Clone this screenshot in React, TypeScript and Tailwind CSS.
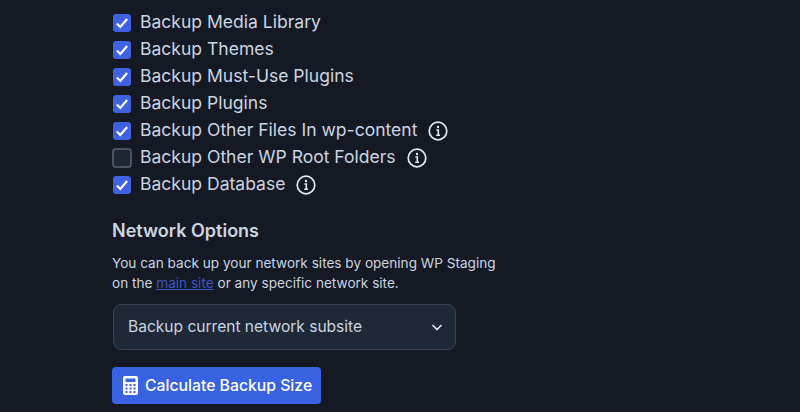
import React from "react";

const interFont = "font-['Inter',sans-serif]";

const InfoIcon = () => (
  <svg width="20" height="20" viewBox="0 0 20 20" fill="none" className="shrink-0">
    <circle cx="10" cy="10" r="8.8" stroke="#e2e8f0" strokeWidth="1.7" />
    <circle cx="10" cy="6" r="1.2" fill="#e2e8f0" />
    <path d="M8.400 9h1.900v5.200M8.200 14.300h3.800" stroke="#e2e8f0" strokeWidth="1.6" />
  </svg>
);

const Checkbox = ({ checked }: { checked: boolean }) =>
  checked ? (
    <span className="w-[18px] h-[18px] rounded-[3px] bg-[#3f62e0] flex items-center justify-center shrink-0">
      <svg width="16" height="16" viewBox="0 0 14 14" fill="none">
        <path d="M2.500 7.500l3 3 6-7" stroke="#fff" strokeWidth="1.9" />
      </svg>
    </span>
  ) : (
    <span className="w-[20px] h-[20px] -mx-px rounded-[4px] bg-[#1f2633] border-2 border-[#4b5261] shrink-0" />
  );

const options = [
  { label: "Backup Media Library", checked: true },
  { label: "Backup Themes", checked: true },
  { label: "Backup Must-Use Plugins", checked: true },
  { label: "Backup Plugins", checked: true },
  { label: "Backup Other Files In wp-content", checked: true, info: true },
  { label: "Backup Other WP Root Folders", checked: false, info: true },
  { label: "Backup Database", checked: true, info: true },
];

export default function App() {
  return (
    <div className={`w-[800px] h-[412px] overflow-hidden bg-[#151924] pl-[113px] pt-[9px] ${interFont}`}>
      <div className="flex flex-col">
        {options.map((o) => (
          <div key={o.label} className="h-[27px] flex items-center">
            <Checkbox checked={o.checked} />
            <span className="ml-[9px] text-[17.55px] text-[#cbd5e1]">{o.label}</span>
            {o.info && (
              <span className="ml-[11px]">
                <InfoIcon />
              </span>
            )}
          </div>
        ))}
      </div>
      <h3 className="mt-[19px] -ml-px text-[18px] leading-[28px] font-semibold text-[#cbd5e1]">Network Options</h3>
      <p className="mt-[8px] -ml-px text-[13.6px] leading-[20px] text-[#cbd5e1]">
        You can back up your network sites by opening WP Staging
        <br />
        on the <a className="text-[#3d55c9] underline">main site</a> or any specific network site.
      </p>
      <div className="mt-[11px] w-[343px] h-[46px] rounded-[8px] bg-[#1e2837] border border-[#3a4352] flex items-center justify-between pl-[14px] pr-[11px]">
        <span className="text-[15.55px] text-[#cbd5e1]">Backup current network subsite</span>
        <svg width="14" height="14" viewBox="0 0 14 14" fill="none">
          <path d="M2.500 5l4.500 4.500L11.500 5" stroke="#e2e8f0" strokeWidth="1.6" />
        </svg>
      </div>
      <button className="mt-[17px] -ml-px h-[37px] w-[209px] rounded-[4px] bg-[#3862e0] flex items-center pl-[11px] gap-[7px] text-white text-[15.75px] font-medium">
        <svg width="15" height="19" viewBox="0 0 15 19" className="shrink-0">
          <path
            fillRule="evenodd"
            fill="#fff"
            d="M2 0h11a2 2 0 0 1 2 2v15a2 2 0 0 1-2 2H2a2 2 0 0 1-2-2V2a2 2 0 0 1 2-2zM2.500 2.500v3.500h10V2.500zM2.500 8v2h2V8zM6.500 8v2h2V8zM10.500 8v2h2V8zM2.500 11.500v2h2v-2zM6.500 11.500v2h2v-2zM10.500 11.500v2h2v-2zM2.500 15v2h2v-2zM6.500 15v2h2v-2zM10.500 15v2h2v-2z"
          />
        </svg>
        Calculate Backup Size
      </button>
    </div>
  );
}
